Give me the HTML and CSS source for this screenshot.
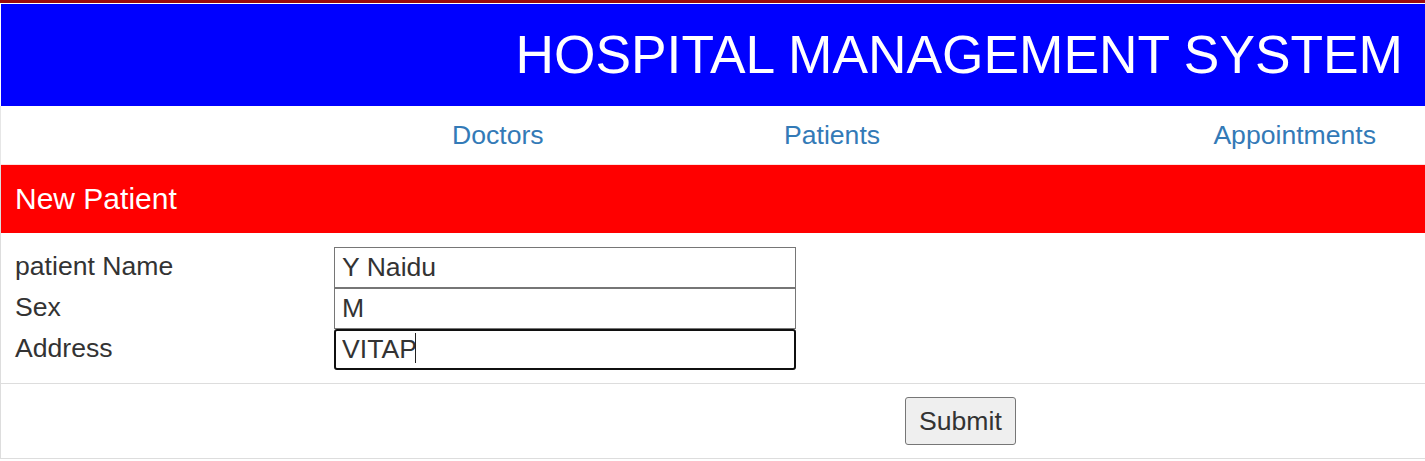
FILE: index.html
```html
<!DOCTYPE html>
<html>
<head>
<meta charset="utf-8">
<title>Hospital Management System</title>
<link rel="stylesheet" href="styles.css">
</head>
<body>
<div class="topline"></div>
<div class="page">
  <header class="banner">
    <h1 class="title">HOSPITAL MANAGEMENT SYSTEM</h1>
  </header>
  <nav class="nav">
    <a href="#" class="nav-link">Doctors</a>
    <a href="#" class="nav-link">Patients</a>
    <a href="#" class="nav-link nav-end">Appointments</a>
  </nav>
  <section class="panel">
    <div class="panel-heading">New Patient</div>
    <form class="panel-body">
      <label class="label" for="pname">patient Name</label>
      <input class="field" id="pname" type="text" value="Y Naidu">
      <label class="label" for="psex">Sex</label>
      <input class="field" id="psex" type="text" value="M">
      <label class="label" for="paddr">Address</label>
      <div class="field-wrap">
        <input class="field field-focus" id="paddr" type="text" value="VITAP">
        <span class="caret"></span>
      </div>
    </form>
    <div class="panel-footer">
      <button class="btn" type="button">Submit</button>
    </div>
  </section>
</div>
</body>
</html>
```
FILE: styles.css
```css
* { box-sizing: border-box; }

body {
  margin: 0;
  font-family: "Liberation Sans", Arial, sans-serif;
  color: #333;
  background: #fff;
}

.topline {
  height: 3px;
  background: #9b0b0b;
}

.page {
  margin-top: 1px;
  padding-left: 1px;
}

.banner {
  height: 102px;
  background: #0000ff;
  display: flex;
  align-items: center;
  justify-content: flex-end;
  padding-right: 22px;
}

.title {
  margin: 0;
  color: #fff;
  font-weight: normal;
  font-size: 53.3px;
  line-height: 1;
}

.nav {
  height: 59px;
  display: grid;
  grid-template-columns: 332px auto 1fr;
  align-items: center;
  padding: 0 49px 0 451px;
  border-left: 1px solid #e6e6e6;
  margin-left: -1px;
  border-bottom: 1px solid #fde0e0;
}

.nav-link {
  color: #337ab7;
  text-decoration: none;
  font-size: 26.6px;
  line-height: 30px;
}

.nav-end { justify-self: end; }

.panel {
  margin-left: -1px;
  border-left: 1px solid #ddd;
}

.panel-heading {
  height: 68px;
  background: #ff0000;
  color: #fff;
  font-size: 30px;
  display: flex;
  align-items: center;
  padding-left: 14px;
}

.panel-body {
  margin: 0;
  padding: 14px 0 13px 14px;
  display: grid;
  grid-template-columns: 319px 462px;
  grid-auto-rows: 41px;
  align-items: center;
}

.label {
  font-size: 26.6px;
  line-height: 30px;
  padding-bottom: 3px;
  color: #333;
}

.field {
  width: 462px;
  height: 41px;
  margin: 0;
  padding: 0 7px;
  font-family: "Liberation Sans", Arial, sans-serif;
  font-size: 26.6px;
  color: #333;
  border: 1px solid #767676;
  border-radius: 0;
  background: #fff;
  outline: none;
}

.field-wrap {
  position: relative;
  height: 41px;
}

.field-focus {
  border: 2px solid #101010;
  border-radius: 3px;
  padding: 0 6px;
}

.caret {
  position: absolute;
  left: 81px;
  top: 4px;
  width: 1px;
  height: 30px;
  background: #222;
}

.panel-footer {
  border-top: 1px solid #ddd;
  border-bottom: 1px solid #ddd;
  padding: 13px 0 13px 904px;
}

.btn {
  display: block;
  height: 48px;
  padding: 0 13px;
  font-family: "Liberation Sans", Arial, sans-serif;
  font-size: 26.6px;
  color: #333;
  background: #efefef;
  border: 1px solid #767676;
  border-radius: 3px;
}
```
